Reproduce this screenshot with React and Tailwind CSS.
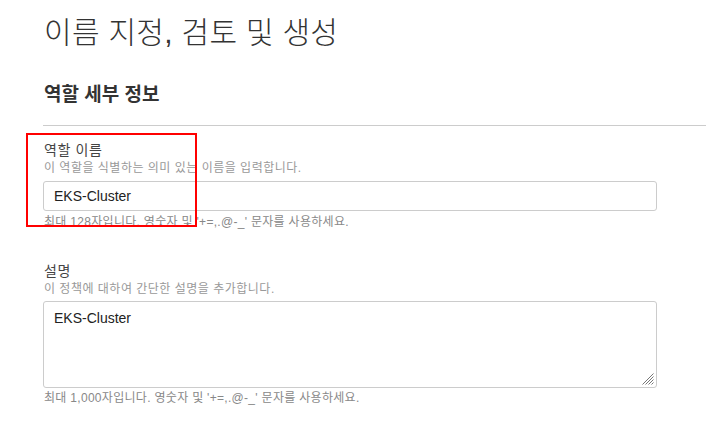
export default function App() {
  const font = { fontFamily: '"Liberation Sans", "Noto Sans CJK KR", sans-serif' }

  return (
    <div className="relative w-[706px] h-[442px] bg-white overflow-hidden" style={font}>
      <div className="pl-[44px] pt-[13px]">
        <h1 className="text-[30px] leading-[40px] font-light text-[#333] tracking-[0.3px]">이름 지정, 검토 및 생성</h1>

        <h2 className="mt-[30px] text-[19px] leading-[24px] font-bold text-[#333]">역할 세부 정보</h2>
      </div>

      <div className="ml-[43px] mt-[18px] border-t border-[#ccc]" />

      <div className="pl-[43px] w-[657px]">
        {/* Role name */}
        <div className="mt-[14px]">
          <label className="block pl-px text-[14px] leading-[20px] tracking-[0.6px] text-[#444]">역할 이름</label>
          <p className="pl-px text-[12px] leading-[16px] tracking-[0.5px] text-[#999]">이 역할을 식별하는 의미 있는 이름을 입력합니다.</p>
          <input
            readOnly
            defaultValue="EKS-Cluster"
            className="mt-[5px] w-full h-[30px] px-[10px] border border-[#ccc] rounded-[3px] text-[14px] text-[#222] outline-none"
            style={font}
          />
          <p className="mt-[3px] pl-px text-[12px] leading-[16px] tracking-[0.3px] text-[#888]">최대 128자입니다. 영숫자 및 '+=,.@-_' 문자를 사용하세요.</p>
        </div>

        {/* Description */}
        <div className="mt-[31px]">
          <label className="block pl-px text-[14px] leading-[20px] tracking-[0.6px] text-[#444]">설명</label>
          <p className="pl-px text-[12px] leading-[16px] tracking-[0.5px] text-[#999]">이 정책에 대하여 간단한 설명을 추가합니다.</p>
          <div className="relative mt-[4px]">
            <textarea
              readOnly
              defaultValue="EKS-Cluster"
              className="block w-full h-[87px] px-[10px] py-[6px] border border-[#ccc] rounded-[3px] text-[14px] leading-[20px] text-[#222] outline-none resize-none"
              style={font}
            />
            {/* resize grip */}
            <svg className="absolute right-[3px] bottom-[3px]" width="12" height="12" viewBox="0 0 12 12">
              <g stroke="#777" strokeWidth="1">
                <line x1="11.5" y1="0.5" x2="0.5" y2="11.5" />
                <line x1="11.5" y1="3.5" x2="3.5" y2="11.5" />
                <line x1="11.5" y1="6.5" x2="6.5" y2="11.5" />
                <line x1="11.5" y1="9.5" x2="9.5" y2="11.5" />
              </g>
            </svg>
          </div>
          <p className="mt-[2px] pl-px text-[12px] leading-[16px] tracking-[0.3px] text-[#888]">최대 1,000자입니다. 영숫자 및 '+=,.@-_' 문자를 사용하세요.</p>
        </div>
      </div>

      {/* highlight box */}
      <div className="absolute left-[26px] top-[133px] w-[171px] h-[94px] border-2 border-[#f00]" />
    </div>
  )
}
